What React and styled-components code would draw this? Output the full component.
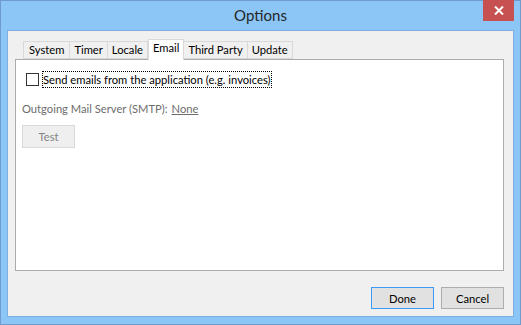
import React, { useState } from "react";
import styled, { createGlobalStyle } from "styled-components";

const GlobalStyle = createGlobalStyle`
  html, body {
    margin: 0;
    padding: 0;
    background: #8bc6f7;
  }
  body {
    font-family: "Segoe UI", Lato, "Liberation Sans", sans-serif;
    font-size: 11.2px;
  }
`;

const tabs = ["System", "Timer", "Locale", "Email", "Third Party", "Update"];

const App = () => {
  const [active, setActive] = useState("Email");
  const [sendMail, setSendMail] = useState(false);

  return (
    <>
      <GlobalStyle />
      <Window>
        <TitleBar>
          <Title>Options</Title>
          <Close aria-label="close">
            <svg width="10" height="9" viewBox="0 0 10 9">
              <path
                d="M1 0.5l8 8M9 0.5l-8 8"
                stroke="#fff"
                strokeWidth="2"
                fill="none"
              />
            </svg>
          </Close>
        </TitleBar>

        <Client>
          <TabStrip>
            {tabs.map((t) => (
              <Tab key={t} $active={t === active} onClick={() => setActive(t)}>
                {t}
              </Tab>
            ))}
          </TabStrip>

          <Panel>
            <CheckRow>
              <Box
                type="checkbox"
                checked={sendMail}
                onChange={(e) => setSendMail(e.target.checked)}
              />
              <FocusLabel>Send emails from the application (e.g. invoices)</FocusLabel>
            </CheckRow>

            <ServerRow>
              Outgoing Mail Server (SMTP):<ServerLink>None</ServerLink>
            </ServerRow>

            <TestButton disabled>Test</TestButton>
          </Panel>

          <Footer>
            <Button $primary>Done</Button>
            <Button>Cancel</Button>
          </Footer>
        </Client>
      </Window>
    </>
  );
};

export default App;

const Window = styled.div`
  width: 521px;
  height: 325px;
  box-sizing: border-box;
  border: 1px solid #6f9ccc;
  background: #8bc6f7;
  display: flex;
  flex-direction: column;
`;

// title bar
const TitleBar = styled.div`
  position: relative;
  height: 29px;
  display: flex;
  align-items: center;
  justify-content: center;
`;

const Title = styled.div`
  font-size: 15px;
  color: #262626;
  margin-top: -1px;
`;

const Close = styled.div`
  position: absolute;
  top: -1px;
  right: 6px;
  width: 31px;
  height: 21px;
  background: #c75050;
  display: flex;
  align-items: center;
  justify-content: center;
`;

// client area
const Client = styled.div`
  margin: 0 6px 7px 6px;
  flex: 1;
  border: 1px solid #7daee0;
  background: #f0f0f0;
  padding: 8px 9px 0 7px;
  display: flex;
  flex-direction: column;
`;

const TabStrip = styled.div`
  display: flex;
  align-items: flex-end;
  padding-left: 8px;
  height: 20px;
  position: relative;
  z-index: 1;
`;

const Tab = styled.div`
  box-sizing: border-box;
  height: ${(p) => (p.$active ? "21px" : "18px")};
  margin-bottom: ${(p) => (p.$active ? "-1px" : "0")};
  padding: 0 4px;
  background: ${(p) => (p.$active ? "#fff" : "#f0f0f0")};
  border: 1px solid #d9d9d9;
  border-bottom: ${(p) => (p.$active ? "none" : "1px solid #d9d9d9")};
  margin-left: ${(p) => (p.$active ? "0" : "-1px")};
  color: #000;
  line-height: 16px;
  cursor: default;
  &:first-child {
    margin-left: 0;
    padding: 0 5px;
  }
`;

const Panel = styled.div`
  height: 212px;
  box-sizing: border-box;
  background: #fff;
  border: 1px solid #acacac;
  padding: 12px 0 0 6px;
  display: flex;
  flex-direction: column;
  align-items: flex-start;
`;

const CheckRow = styled.label`
  display: flex;
  align-items: center;
  gap: 4px;
  margin-left: 4px;
`;

const Box = styled.input`
  appearance: none;
  width: 13px;
  height: 13px;
  margin: 0;
  border: 1px solid #333;
  background: #fff;
  box-sizing: border-box;
`;

const FocusLabel = styled.span`
  outline: 1px dotted #000;
  line-height: 15px;
  color: #000;
`;

const ServerRow = styled.div`
  margin-top: 15px;
  color: #6d6d6d;
  display: flex;
  gap: 4px;
`;

const ServerLink = styled.span`
  text-decoration: underline;
  color: #6d6d6d;
`;

const TestButton = styled.button`
  margin-top: 10px;
  width: 53px;
  height: 23px;
  font: inherit;
  color: #838383;
  background: #efefef;
  border: 1px solid #d9d9d9;
  padding: 0;
`;

const Footer = styled.div`
  display: flex;
  justify-content: flex-end;
  gap: 7px;
  margin-top: 16px;
`;

const Button = styled.button`
  width: 63px;
  height: 22px;
  font: inherit;
  color: #000;
  background: #e1e1e1;
  border: 1px solid ${(p) => (p.$primary ? "#3c9af5" : "#adadad")};
  padding: 0;
`;
